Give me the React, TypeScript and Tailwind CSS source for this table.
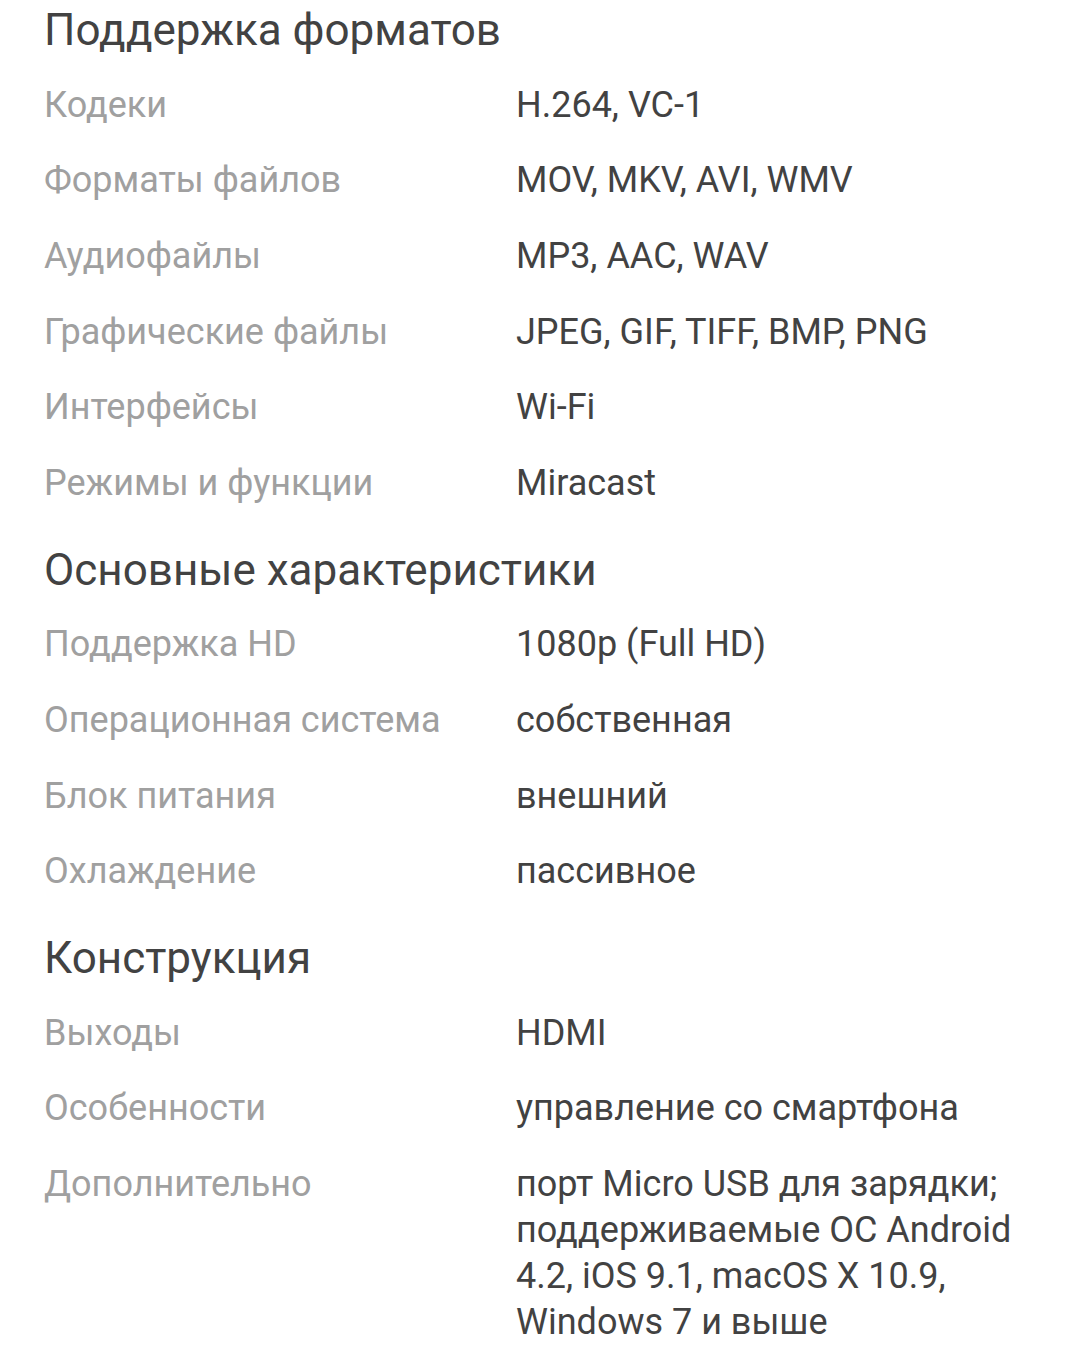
import React from 'react';

type Row = { label: string; value: string };
type Section = { title: string; rows: Row[] };

const sections: Section[] = [
  {
    title: 'Поддержка форматов',
    rows: [
      { label: 'Кодеки', value: 'H.264, VC-1' },
      { label: 'Форматы файлов', value: 'MOV, MKV, AVI, WMV' },
      { label: 'Аудиофайлы', value: 'MP3, AAC, WAV' },
      { label: 'Графические файлы', value: 'JPEG, GIF, TIFF, BMP, PNG' },
      { label: 'Интерфейсы', value: 'Wi-Fi' },
      { label: 'Режимы и функции', value: 'Miracast' },
    ],
  },
  {
    title: 'Основные характеристики',
    rows: [
      { label: 'Поддержка HD', value: '1080p (Full HD)' },
      { label: 'Операционная система', value: 'собственная' },
      { label: 'Блок питания', value: 'внешний' },
      { label: 'Охлаждение', value: 'пассивное' },
    ],
  },
  {
    title: 'Конструкция',
    rows: [
      { label: 'Выходы', value: 'HDMI' },
      { label: 'Особенности', value: 'управление со смартфона' },
      {
        label: 'Дополнительно',
        value: 'порт Micro USB для зарядки; поддерживаемые ОС Android 4.2, iOS 9.1, macOS X 10.9, Windows 7 и выше',
      },
    ],
  },
];

export default function App() {
  return (
    <div className="min-h-[1350px] bg-white px-[44px] font-['Roboto','Noto_Sans',sans-serif] antialiased">
      {sections.map((section, i) => (
        <section key={section.title} className={i === 0 ? 'pt-[4px]' : 'pt-[23px]'}>
          {/* Section heading */}
          <h2 className="mb-[11px] text-[44px] leading-[52px] font-normal text-[#424242]">{section.title}</h2>
          <div>
            {section.rows.map((row) => (
              <div key={row.label} className="grid grid-cols-[472px_1fr] py-[14.8px] text-[36px] leading-[46px]">
                <div className="text-[#a0a0a0]">{row.label}</div>
                <div className="text-[#424242]">{row.value}</div>
              </div>
            ))}
          </div>
        </section>
      ))}
    </div>
  );
}
